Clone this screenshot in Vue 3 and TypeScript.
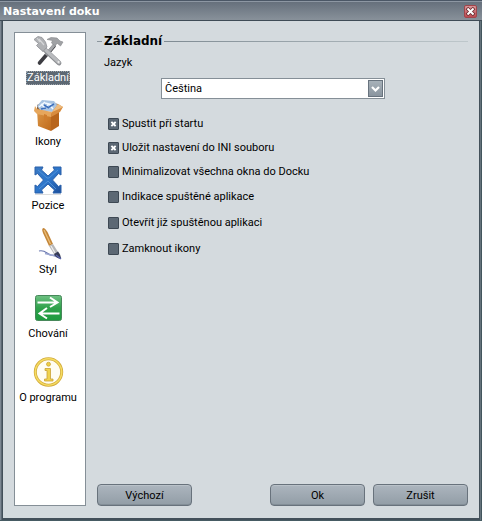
<script setup lang="ts">
import { ref } from 'vue'

interface Section {
  id: string
  label: string
}

interface Option {
  id: string
  label: string
  checked: boolean
}

const sections: Section[] = [
  { id: 'basic', label: 'Základní' },
  { id: 'icons', label: 'Ikony' },
  { id: 'position', label: 'Pozice' },
  { id: 'style', label: 'Styl' },
  { id: 'behavior', label: 'Chování' },
  { id: 'about', label: 'O programu' },
]

const active = ref('basic')
const language = ref('cs')

const groups = ref<Option[][]>([
  [
    { id: 'startup', label: 'Spustit při startu', checked: true },
    { id: 'ini', label: 'Uložit nastavení do INI souboru', checked: true },
    { id: 'minimize', label: 'Minimalizovat všechna okna do Docku', checked: false },
  ],
  [
    { id: 'indicator', label: 'Indikace spuštěné aplikace', checked: false },
    { id: 'running', label: 'Otevřít již spuštěnou aplikaci', checked: false },
    { id: 'lock', label: 'Zamknout ikony', checked: false },
  ],
])
</script>

<template>
  <div class="window">
    <header class="titlebar">
      <h1>Nastavení doku</h1>
      <button class="close" type="button">
        <svg viewBox="0 0 11 11" width="11" height="11">
          <path d="M3.200 3.200l4.600 4.600M7.800 3.200l-4.600 4.600" stroke="#6b2a2e" stroke-width="3.600" stroke-linecap="square" />
          <path d="M3.200 3.200l4.600 4.600M7.800 3.200l-4.600 4.600" stroke="#fff" stroke-width="2" stroke-linecap="square" />
        </svg>
      </button>
    </header>

    <div class="body">
      <nav class="sidebar">
        <button
          v-for="s in sections"
          :key="s.id"
          type="button"
          class="item"
          :class="{ active: active === s.id }"
          @click="active = s.id"
        >
          <svg v-if="s.id === 'basic'" viewBox="0 0 32 32" width="32" height="32">
            <path d="M7.500 28L22 11" stroke="#3d3d42" stroke-width="3.600" stroke-linecap="round" />
            <path d="M14 20L23 9" stroke="#a5a7aa" stroke-width="3" />
            <path d="M15 4.500L19 2.500L25 3L28 6L31 7L28.500 11L25.500 8.500L22.500 10.500L19.500 8L20.500 5.500Z" fill="#a0a2a5" stroke="#85878a" stroke-width=".6" />
            <path d="M11 13L27 28" stroke="#8b8d91" stroke-width="4.800" stroke-linecap="round" />
            <path d="M11 12.500L27 27.500" stroke="#b9bbbe" stroke-width="3.200" stroke-linecap="round" />
            <path d="M2 4.500L6 1.500L10 2.500L13.500 7L15 12L11 16.500L7 13L4.500 10.500L6.500 8.500Z" fill="#afb1b4" stroke="#8f9195" stroke-width=".8" />
            <path d="M7 4l5 6M5 3l3 4" stroke="#d5d6d8" stroke-width="1.200" />
            <circle cx="26.500" cy="27" r="1" fill="#eee" />
          </svg>

          <svg v-else-if="s.id === 'icons'" viewBox="0 0 32 32" width="32" height="32">
            <defs>
              <linearGradient id="box" x1="0" y1="0" x2="1" y2="1">
                <stop offset="0" stop-color="#dc9747" />
                <stop offset="1" stop-color="#bf6a1b" />
              </linearGradient>
            </defs>
            <path d="M5 6L13 2L26 5L22 12L5 11Z" fill="#8d6540" />
            <path d="M5 7L10 1L22 2L26 7L20 13L8 11Z" fill="#a9c4e2" />
            <path d="M7 8l6-5M13 4l8 2M11 10l6-5 4 5M9 5l4 4" stroke="#f3f9ff" stroke-width="1.500" fill="none" />
            <path d="M12 6l5 3M17 8l5-3M9 10l5-1" stroke="#3c6fbd" stroke-width="1.500" />
            <path d="M5 11L19 14V32L6 27Z" fill="url(#box)" />
            <path d="M19 14L27 10V27L19 32Z" fill="#b8651c" />
            <path d="M3 7L2 12L5 15L19 18L20 13L5 10Z" fill="#e6a65c" />
            <path d="M20 13L26 5L31 8L28 13L19 18Z" fill="#d88c3f" />
            <path d="M26 5L31 8L27 10L20 13" fill="#edbc80" />
            <path d="M12 15v7l3 1v-7Z" fill="#cf7d2d" />
          </svg>

          <svg v-else-if="s.id === 'position'" viewBox="0 0 32 32" width="32" height="32">
            <defs>
              <linearGradient id="arrows" x1="0" y1="0" x2="1" y2="1">
                <stop offset="0" stop-color="#3a79c2" />
                <stop offset=".5" stop-color="#2d76cb" />
                <stop offset="1" stop-color="#1c4f9b" />
              </linearGradient>
            </defs>
            <path d="M3 4H11L9.500 7L16 13L22.500 7L21 4H29V12L26.500 10.500L20.500 17L26.500 23.500L29 22V30H21L22.500 27L16 21L9.500 27L11 30H3V22L5.500 23.500L11.500 17L5.500 10.500L3 12Z" fill="url(#arrows)" stroke="#2a60aa" stroke-width="1" />
            <path d="M6 7l9 8h2l9-8M7 26l9-8 8 8" fill="none" stroke="#4f90d8" stroke-width="1" />
            <path d="M3 31.500H29" stroke="#ddd" stroke-width="1" />
          </svg>

          <svg v-else-if="s.id === 'style'" viewBox="0 0 32 32" width="32" height="32">
            <path d="M7 24Q11 23 15 26T21 28Q24 29 29 31" fill="none" stroke="#6876ae" stroke-width="1.200" />
            <path d="M13 26.500Q19 27.500 28 31" fill="none" stroke="#9aa5cf" stroke-width="1.600" />
            <path d="M12 1Q9 1 11 6L17 19L21 17L15.500 5Q13.500 2 12 1Z" fill="#c48639" />
            <path d="M12 3L18.500 17" stroke="#e9bd78" stroke-width="1.300" />
            <path d="M17 19L21 17L26 25L22 27Z" fill="#b6b7b9" />
            <path d="M19 19L23 26" stroke="#eee" stroke-width="1.300" />
            <path d="M22 27L26 24.500Q29 28 29 32Q23 30.500 22 27Z" fill="#363b55" />
            <path d="M24 28L29 32" stroke="#5964ae" stroke-width="1.400" />
          </svg>

          <svg v-else-if="s.id === 'behavior'" viewBox="0 0 32 32" width="32" height="32">
            <defs>
              <linearGradient id="green" x1="0" y1="0" x2="0" y2="1">
                <stop offset="0" stop-color="#6fc183" />
                <stop offset=".5" stop-color="#2fa24b" />
                <stop offset="1" stop-color="#1c9a3e" />
              </linearGradient>
            </defs>
            <rect x="3.500" y="4.500" width="26" height="25" rx="2" fill="url(#green)" stroke="#47885a" />
            <path d="M5.500 11.500H25M18 6.500L25.500 11.500L18 16M27.500 22.500H8M15 17L7.500 22.500L15 27.500" fill="none" stroke="#fff" stroke-width="2" />
          </svg>

          <svg v-else viewBox="0 0 32 32" width="32" height="32">
            <circle cx="16.500" cy="17" r="13.200" fill="#fffdf2" stroke="#d2aa3a" stroke-width="3" />
            <circle cx="16.500" cy="17" r="13.200" fill="none" stroke="#f5dc62" stroke-width="1.500" />
            <circle cx="16.500" cy="9.200" r="2" fill="#edcf45" stroke="#c9a136" stroke-width=".7" />
            <path d="M13 13.500H18.500V24H21V26H12.500V24H15V15.500H13Z" fill="#f0d34d" stroke="#c9a136" stroke-width=".8" />
          </svg>
          <span class="item-label">{{ s.label }}</span>
        </button>
      </nav>

      <main class="panel">
        <h2 class="heading">Základní</h2>

        <label class="field-label" for="language">Jazyk</label>
        <div class="combo">
          <select id="language" v-model="language">
            <option value="cs">Čeština</option>
          </select>
          <span class="arrow">
            <svg viewBox="0 0 13 15" width="13" height="15">
              <path d="M3 6l3.500 3.500L10 6" fill="none" stroke="#fff" stroke-width="2.200" />
            </svg>
          </span>
        </div>

        <div class="options">
          <div v-for="(group, i) in groups" :key="i" class="group">
            <label v-for="o in group" :key="o.id" class="option">
              <span class="tick">
                <input v-model="o.checked" type="checkbox" />
                <svg v-if="o.checked" viewBox="0 0 11 12" width="11" height="12">
                  <path d="M4 4.500l3 3M7 4.500l-3 3" stroke="#fff" stroke-width="1.800" stroke-linecap="square" />
                </svg>
              </span>
              <span>{{ o.label }}</span>
            </label>
          </div>
        </div>

        <footer class="actions">
          <button class="btn first" type="button">Výchozí</button>
          <button class="btn" type="button">Ok</button>
          <button class="btn" type="button">Zrušit</button>
        </footer>
      </main>
    </div>
  </div>
</template>

<style>
body {
  margin: 0;
  background: #d4dade;
}
</style>

<style scoped>
.window {
  box-sizing: border-box;
  min-height: 100vh;
  display: flex;
  flex-direction: column;
  background: linear-gradient(90deg, #7d8893 0 1px, #5c6873 1px 2px, #43505a 2px calc(100% - 2px), #65737c calc(100% - 2px) calc(100% - 1px), #43565d calc(100% - 1px));
  border-bottom: 1px solid #465b63;
  font-family: Tahoma, Roboto, "DejaVu Sans Condensed", sans-serif;
  font-size: 11px;
  line-height: 14px;
  color: #000;
}

button,
select {
  font: inherit;
  color: inherit;
}

svg {
  display: block;
  fill: none;
}

.titlebar {
  display: flex;
  align-items: center;
  justify-content: space-between;
  box-sizing: border-box;
  height: 21px;
  padding: 2px 5px 0 3px;
  border-top: 1px solid #4b5766;
  border-bottom: 1px solid #3f4b56;
  background: linear-gradient(#8d97a3 0 1px, #66707c 1px, #88919a);
}

.titlebar h1 {
  margin: 0;
  font-family: "DejaVu Sans", sans-serif;
  font-size: 11px;
  font-weight: bold;
  color: #fff;
}

.close {
  box-sizing: border-box;
  width: 13px;
  height: 13px;
  padding: 0;
  border: 1px solid #a1454b;
  border-radius: 2px;
  background: linear-gradient(#d9979a, #bd4a51);
}

.body {
  flex: 1;
  display: flex;
  gap: 11px;
  margin: 0 3px 2px;
  padding: 11px 11px 12px 11px;
  background: #d4dade;
}

.sidebar {
  box-sizing: border-box;
  width: 72px;
  flex: none;
  display: flex;
  flex-direction: column;
  gap: 14px;
  padding: 2px 4px 0 0;
  border: 1px solid #858f97;
  background: #fff;
}

.item {
  display: flex;
  flex-direction: column;
  align-items: center;
  gap: 4px;
  padding: 0;
  border: 0;
  background: none;
  white-space: nowrap;
}

.item svg {
  overflow: visible;
}

.item-label {
  padding: 0 1px;
}

.active .item-label {
  background: #5d6873;
  color: #fff;
  outline: 1px dotted #9ba3ab;
  outline-offset: -1px;
}

.panel {
  flex: 1;
  min-width: 0;
  display: flex;
  flex-direction: column;
}

.heading {
  display: flex;
  align-items: center;
  gap: 2px;
  margin: 2px 0 0;
  font-family: "DejaVu Sans", sans-serif;
  font-size: 12px;
  line-height: 14px;
}

.heading::before {
  content: "";
  width: 5px;
  height: 1px;
  background: #8b969d;
}

.heading::after {
  content: "";
  flex: 1;
  height: 1px;
  background: linear-gradient(90deg, #7f8b93, #bec7cb);
}

.field-label {
  margin: 8px 0 0 7px;
  align-self: flex-start;
}

.combo {
  display: grid;
  align-items: center;
  margin: 8px 83px 0 64px;
}

.combo > * {
  grid-area: 1 / 1;
}

.combo select {
  appearance: none;
  box-sizing: border-box;
  width: 100%;
  height: 21px;
  padding: 0 20px 0 3px;
  border: 1px solid #858f97;
  border-radius: 0;
  background: #fff;
}

.arrow {
  justify-self: end;
  margin-right: 2px;
  border: 1px solid #68737e;
  background: linear-gradient(#a7b1b9, #8a959f);
  pointer-events: none;
}

.options {
  display: flex;
  flex-direction: column;
  margin: 13px 0 0 11px;
}

.group {
  display: flex;
  flex-direction: column;
  align-items: flex-start;
}

.option {
  display: flex;
  align-items: center;
  gap: 3px;
  height: 24px;
}

.group + .group .option {
  height: 26px;
}

.tick {
  display: grid;
}

.tick > * {
  grid-area: 1 / 1;
  pointer-events: none;
}

.tick input {
  appearance: none;
  box-sizing: border-box;
  width: 11px;
  height: 12px;
  margin: 0;
  border: 1px solid #3d4853;
  border-radius: 1px;
  background: #5c6874;
}

.actions {
  display: flex;
  gap: 8px;
  margin-top: auto;
}

.btn {
  width: 95px;
  height: 22px;
  padding: 1px 0 0;
  border: 1px solid #68727c;
  border-radius: 4px;
  background: linear-gradient(#acb5be, #929da6);
  box-shadow: inset 0 1px 0 #b9c1c8, inset 0 -1px 0 #838e97;
}

.first {
  margin-right: auto;
}
</style>
